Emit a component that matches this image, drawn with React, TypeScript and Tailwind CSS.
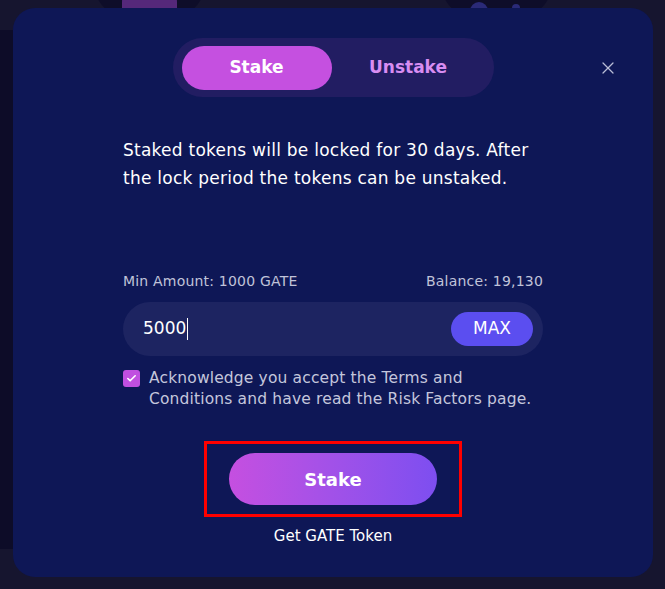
import { X, Check } from "lucide-react"

export default function App() {
  return (
    <div
      className="relative w-[665px] h-[589px] overflow-hidden bg-[#16152f]"
      style={{ fontFamily: '"DejaVu Sans", "Open Sans", sans-serif' }}
    >
      {/* backdrop decoration behind the modal */}
      <div className="absolute left-0 top-[30px] w-[13px] h-[519px] bg-[#0d0c28]" />
      <div className="absolute left-[93px] top-[-60px] w-[113px] h-[80px] rounded-full bg-[#0e0d29]" />
      <div className="absolute left-[122px] top-[-10px] w-[55px] h-[30px] rounded-[12px] bg-[#55287a]" />
      <div className="absolute left-[440px] top-[-60px] w-[113px] h-[80px] rounded-full bg-[#0e0d29]" />
      <div className="absolute left-[470px] top-[2px] w-[18px] h-[18px] rounded-full bg-[#2a2a78]" />
      <div className="absolute left-[512px] top-[4px] w-[8px] h-[8px] rounded-full bg-[#2a2a78]" />

      <div className="relative pt-[8px] pl-[13px]">
        <div className="relative w-[640px] h-[569px] rounded-[22px] bg-[#0e1756] flex flex-col items-center">
          <button className="absolute right-[35px] top-[50px] text-[#b9bdd6]">
            <X className="w-[20px] h-[20px]" strokeWidth={1.5} />
          </button>

          {/* tabs */}
          <div className="mt-[30px] w-[321px] h-[59px] rounded-full bg-[#221d62] flex items-center pl-[9px] pr-[9px]">
            <div className="w-[150px] h-[44px] rounded-full bg-[#c550e0] flex items-center justify-center text-white text-[17px] font-bold">
              Stake
            </div>
            <div className="flex-1 text-center text-[#d88df2] text-[17px] font-bold">Unstake</div>
          </div>

          <div className="w-[420px] mt-[39px] text-white text-[17px] leading-[28px] tracking-[0.25px]">
            Staked tokens will be locked for 30 days. After the lock period the tokens can be unstaked.
          </div>

          <div className="w-[420px] mt-[80px] flex justify-between text-[14px] leading-[18px] text-[#c0c3d9] tracking-[0.2px]">
            <span>Min Amount: 1000 GATE</span>
            <span>Balance: 19,130</span>
          </div>

          <div className="w-[420px] h-[54px] mt-[12px] rounded-full bg-[#1d2461] flex items-center pl-[20px] pr-[10px]">
            <div className="flex-1 flex items-center text-white text-[17px]">
              5000
              <span className="w-px h-[22px] bg-white ml-[1px]" />
            </div>
            <button className="w-[82px] h-[34px] rounded-full bg-[#5b4ef0] text-white text-[17px]">
              MAX
            </button>
          </div>

          <div className="w-[420px] mt-[12px] flex items-start gap-[9px]">
            <div className="mt-[2px] w-[17px] h-[17px] rounded-[3px] bg-[#c04fe0] flex items-center justify-center shrink-0">
              <Check className="w-[11px] h-[11px] text-white" strokeWidth={3.5} />
            </div>
            <div className="w-[385px] text-[15.5px] leading-[21px] text-[#c4c6dc] tracking-[0.15px]">
              Acknowledge you accept the Terms and Conditions and have read the Risk Factors page.
            </div>
          </div>

          <div className="mt-[31px] border-[3px] border-[#ff0000] px-[22px] py-[9px]">
            <button className="w-[208px] h-[52px] rounded-full bg-gradient-to-r from-[#c54fe0] to-[#7d4ef0] text-white text-[18px] font-bold">
              Stake
            </button>
          </div>

          <div className="mt-[9px] text-[15px] leading-[20px] text-white">Get GATE Token</div>
        </div>
      </div>
    </div>
  )
}
